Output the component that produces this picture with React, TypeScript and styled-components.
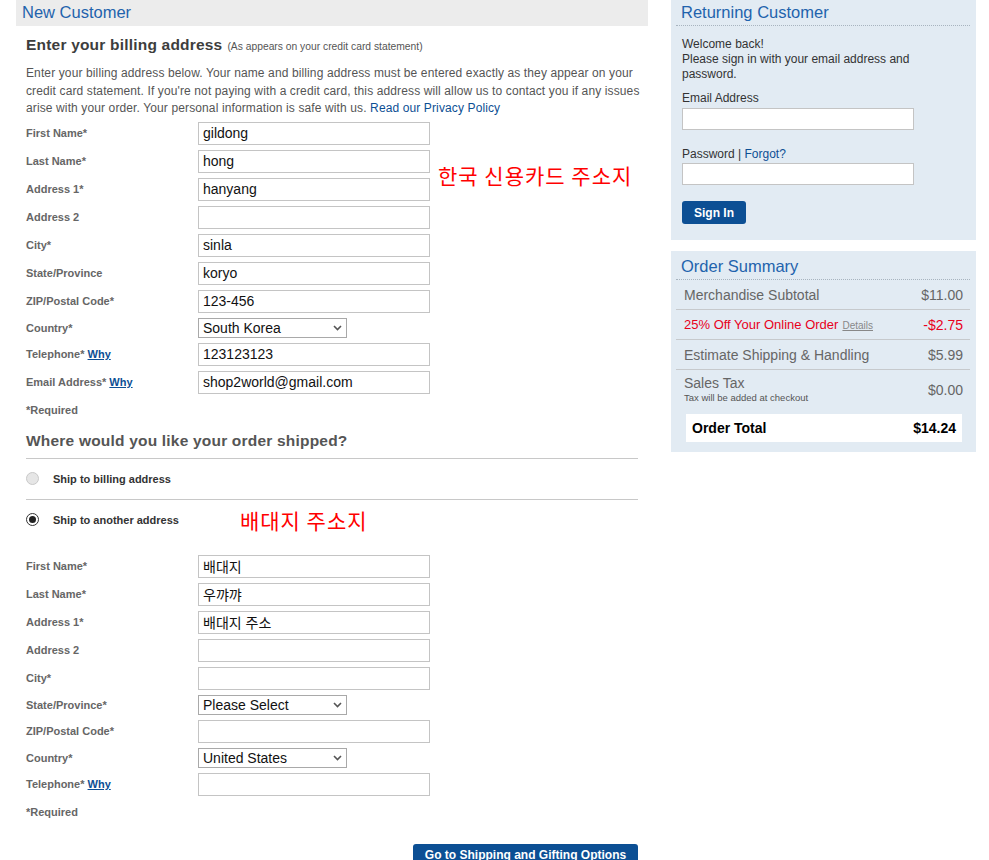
import styled, { createGlobalStyle } from 'styled-components'

const GlobalStyle = createGlobalStyle`
  body {
    margin: 0;
    background: #ffffff;
    font-family: "Liberation Sans", Arial, "Noto Sans CJK KR", sans-serif;
  }
`

const blue = '#1f63ad'
const linkBlue = '#0d4f94'

const Page = styled.div`
  display: flex;
  align-items: flex-start;
  gap: 23px;
  padding-left: 16px;
  width: 989px;
  box-sizing: border-box;
`

const LeftColumn = styled.div`
  width: 632px;
`

const SectionHeader = styled.div`
  height: 26px;
  background: #ececec;
  color: ${blue};
  font-size: 16.5px;
  line-height: 25px;
  padding-left: 6px;
`

const LeftBody = styled.div`
  padding: 0 10px;
`

const BillingTitle = styled.h2`
  margin: 10px 0 0;
  font-size: 15.5px;
  line-height: 18px;
  font-weight: bold;
  color: #3d3d3d;
  letter-spacing: 0.2px;
`

const TitleNote = styled.span`
  font-size: 10.3px;
  font-weight: normal;
  letter-spacing: 0;
  color: #555;
  margin-left: 5px;
`

const Intro = styled.p`
  margin: 9px 0 0;
  font-size: 12px;
  line-height: 17.5px;
  color: #555;
  letter-spacing: 0.12px;
  white-space: nowrap;
`

const Link = styled.a`
  color: ${linkBlue};
  text-decoration: none;
`

const FormGrid = styled.div<{ $top: number }>`
  display: grid;
  grid-template-columns: 172px 232px 1fr;
  row-gap: 5px;
  align-items: center;
  margin-top: ${({ $top }) => $top}px;
`

const Label = styled.label`
  grid-column: 1;
  font-size: 11px;
  font-weight: bold;
  color: #666;
`

const WhyLink = styled.a`
  color: ${linkBlue};
  text-decoration: underline;
`

const TextInput = styled.input`
  grid-column: 2;
  box-sizing: border-box;
  width: 232px;
  height: 23px;
  margin: 0;
  border: 1px solid #c4c4c4;
  padding: 0 4px;
  font-family: "Liberation Sans", Arial, "Noto Sans CJK KR", sans-serif;
  font-size: 14px;
  color: #111;
  background: #fff;
  outline: none;
`

const SelectBox = styled.div`
  grid-column: 2;
  box-sizing: border-box;
  width: 149px;
  height: 20px;
  border: 1px solid #a9a9a9;
  display: flex;
  align-items: center;
  justify-content: space-between;
  padding: 0 4px 0 4px;
  font-size: 14px;
  color: #111;
  background: #fff;
`

const Chevron = styled.svg`
  width: 9px;
  height: 9px;
`

const Annotation = styled.div`
  color: #ff0000;
  font-family: "Noto Sans CJK KR", sans-serif;
  font-size: 21px;
  letter-spacing: 1px;
  white-space: nowrap;
`

const SideNote = styled(Annotation)`
  grid-column: 3;
  grid-row: 2 / span 2;
  padding-left: 8px;
`

const Required = styled.div<{ $top: number }>`
  margin-top: ${({ $top }) => $top}px;
  font-size: 11px;
  font-weight: bold;
  color: #666;
  line-height: 13px;
`

const ShipHeading = styled.h3`
  margin: 15px 0 0;
  padding-bottom: 8px;
  font-size: 15.5px;
  line-height: 18px;
  font-weight: bold;
  color: #555;
  letter-spacing: 0.2px;
  border-bottom: 1px solid #c8c8c8;
`

const RadioRow = styled.div<{ $line?: boolean; $height: number }>`
  display: flex;
  align-items: center;
  height: ${({ $height }) => $height}px;
  border-bottom: ${({ $line }) => ($line ? '1px solid #c8c8c8' : 'none')};
`

const Radio = styled.span<{ $checked?: boolean }>`
  box-sizing: border-box;
  width: 13px;
  height: 13px;
  border-radius: 50%;
  border: 1px solid ${({ $checked }) => ($checked ? '#333' : '#c9c9c9')};
  background: ${({ $checked }) => ($checked ? '#fff' : '#e6e6e6')};
  display: flex;
  align-items: center;
  justify-content: center;

  &::after {
    content: '';
    width: 7px;
    height: 7px;
    border-radius: 50%;
    background: ${({ $checked }) => ($checked ? '#222' : 'transparent')};
  }
`

const RadioLabel = styled.span`
  margin-left: 14px;
  font-size: 11px;
  font-weight: bold;
  color: #333;
`

const InlineNote = styled(Annotation)`
  margin-left: 61px;
`

const ButtonBar = styled.div`
  display: flex;
  justify-content: flex-end;
  margin-top: 25px;
`

const PrimaryButton = styled.button<{ $width?: number }>`
  box-sizing: border-box;
  height: 23px;
  padding: 0 12px;
  border: none;
  border-radius: 3px;
  background: #0c4f94;
  color: #fff;
  font-family: "Liberation Sans", Arial, sans-serif;
  font-size: 12px;
  font-weight: bold;
  white-space: nowrap;
  ${({ $width }) => ($width ? `width: ${$width}px; padding: 0;` : '')}
`

const RightColumn = styled.div`
  width: 305px;
  display: flex;
  flex-direction: column;
  gap: 11px;
`

const Panel = styled.div<{ $height: number }>`
  box-sizing: border-box;
  height: ${({ $height }) => $height}px;
  background: #e2ebf3;
  padding: 0 6px 0 5px;
`

const PanelTitle = styled.div<{ $height: number }>`
  box-sizing: border-box;
  height: ${({ $height }) => $height}px;
  display: flex;
  align-items: flex-end;
  color: ${blue};
  font-size: 16.5px;
  line-height: 25px;
  padding-left: 5px;
  border-bottom: 1px dotted #a8b4bf;
`

const PanelBody = styled.div`
  padding: 11px 0 0 6px;
  font-size: 12px;
  color: #333;
`

const Welcome = styled.div`
  line-height: 15px;
`

const FieldLabel = styled.div<{ $top: number }>`
  margin-top: ${({ $top }) => $top}px;
  line-height: 15px;
`

const LoginInput = styled.input<{ $gap: number }>`
  display: block;
  box-sizing: border-box;
  width: 232px;
  height: 22px;
  margin: ${({ $gap }) => $gap}px 0 0;
  border: 1px solid #c4c4c4;
  background: #fff;
  outline: none;
`

const SignInRow = styled.div`
  margin-top: 16px;
`

const SummaryRow = styled.div<{ $line?: boolean; $height?: number; $red?: boolean }>`
  display: flex;
  align-items: center;
  justify-content: space-between;
  height: ${({ $height }) => $height ?? 30}px;
  padding: 0 7px 0 8px;
  border-bottom: ${({ $line }) => ($line ? '1px solid #c6c9cc' : 'none')};
  font-size: 14px;
  color: ${({ $red }) => ($red ? '#e8001c' : '#666')};
  box-sizing: border-box;
`

const DiscountLabel = styled.span`
  font-size: 13px;
`

const Details = styled.a`
  font-size: 10px;
  color: #888;
  text-decoration: underline;
  margin-left: 4px;
`

const TaxBlock = styled.div`
  display: flex;
  flex-direction: column;
  line-height: 15px;
`

const TaxNote = styled.span`
  font-size: 9.5px;
  line-height: 14px;
  color: #555;
`

const TotalBox = styled.div`
  display: flex;
  justify-content: space-between;
  align-items: center;
  margin: 4px 8px 0 10px;
  height: 28px;
  padding: 0 6px 0 6px;
  background: #fff;
  font-size: 14px;
  font-weight: bold;
  color: #000;
`

const SelectChevron = () => (
  <Chevron viewBox="0 0 9 9">
    <path d="M1 3 L4.5 6.5 L8 3" fill="none" stroke="#555" strokeWidth="1.6" />
  </Chevron>
)

type Field = {
  label: string
  value?: string
  select?: boolean
  why?: boolean
}

const billingFields: Field[] = [
  { label: 'First Name*', value: 'gildong' },
  { label: 'Last Name*', value: 'hong' },
  { label: 'Address 1*', value: 'hanyang' },
  { label: 'Address 2', value: '' },
  { label: 'City*', value: 'sinla' },
  { label: 'State/Province', value: 'koryo' },
  { label: 'ZIP/Postal Code*', value: '123-456' },
  { label: 'Country*', value: 'South Korea', select: true },
  { label: 'Telephone*', value: '123123123', why: true },
  { label: 'Email Address*', value: 'shop2world@gmail.com', why: true },
]

const shippingFields: Field[] = [
  { label: 'First Name*', value: '배대지' },
  { label: 'Last Name*', value: '우꺄꺄' },
  { label: 'Address 1*', value: '배대지 주소' },
  { label: 'Address 2', value: '' },
  { label: 'City*', value: '' },
  { label: 'State/Province*', value: 'Please Select', select: true },
  { label: 'ZIP/Postal Code*', value: '' },
  { label: 'Country*', value: 'United States', select: true },
  { label: 'Telephone*', value: '', why: true },
]

const renderFields = (fields: Field[]) =>
  fields.map((f) => [
    <Label key={f.label + '-l'}>
      {f.label}
      {f.why && (
        <>
          {' '}
          <WhyLink href="#">Why</WhyLink>
        </>
      )}
    </Label>,
    f.select ? (
      <SelectBox key={f.label + '-s'}>
        <span>{f.value}</span>
        <SelectChevron />
      </SelectBox>
    ) : (
      <TextInput key={f.label + '-i'} defaultValue={f.value} />
    ),
  ])

export default function App() {
  return (
    <>
      <GlobalStyle />
      <Page>
        <LeftColumn>
          <SectionHeader>New Customer</SectionHeader>
          <LeftBody>
            <BillingTitle>
              Enter your billing address
              <TitleNote>(As appears on your credit card statement)</TitleNote>
            </BillingTitle>
            <Intro>
              Enter your billing address below. Your name and billing address must be entered exactly as they appear on your
              <br />
              credit card statement. If you're not paying with a credit card, this address will allow us to contact you if any issues
              <br />
              arise with your order. Your personal information is safe with us. <Link href="#">Read our Privacy Policy</Link>
            </Intro>

            <FormGrid $top={4}>
              <SideNote>한국 신용카드 주소지</SideNote>
              {renderFields(billingFields)}
            </FormGrid>
            <Required $top={10}>*Required</Required>

            <ShipHeading>Where would you like your order shipped?</ShipHeading>
            <RadioRow $line $height={40}>
              <Radio />
              <RadioLabel>Ship to billing address</RadioLabel>
            </RadioRow>
            <RadioRow $height={40}>
              <Radio $checked />
              <RadioLabel>Ship to another address</RadioLabel>
              <InlineNote>배대지 주소지</InlineNote>
            </RadioRow>

            <FormGrid $top={15}>{renderFields(shippingFields)}</FormGrid>
            <Required $top={10}>*Required</Required>

            <ButtonBar>
              <PrimaryButton $width={225}>Go to Shipping and Gifting Options</PrimaryButton>
            </ButtonBar>
          </LeftBody>
        </LeftColumn>

        <RightColumn>
          <Panel $height={240}>
            <PanelTitle $height={26}>Returning Customer</PanelTitle>
            <PanelBody>
              <Welcome>
                Welcome back!
                <br />
                Please sign in with your email address and
                <br />
                password.
              </Welcome>
              <FieldLabel $top={9}>Email Address</FieldLabel>
              <LoginInput $gap={2} />
              <FieldLabel $top={17}>
                Password | <Link href="#">Forgot?</Link>
              </FieldLabel>
              <LoginInput $gap={1} />
              <SignInRow>
                <PrimaryButton>Sign In</PrimaryButton>
              </SignInRow>
            </PanelBody>
          </Panel>

          <Panel $height={201}>
            <PanelTitle $height={29}>Order Summary</PanelTitle>
            <SummaryRow $line>
              <span>Merchandise Subtotal</span>
              <span>$11.00</span>
            </SummaryRow>
            <SummaryRow $line $red>
              <DiscountLabel>
                25% Off Your Online Order<Details href="#">Details</Details>
              </DiscountLabel>
              <span>-$2.75</span>
            </SummaryRow>
            <SummaryRow $line>
              <span>Estimate Shipping &amp; Handling</span>
              <span>$5.99</span>
            </SummaryRow>
            <SummaryRow $height={40}>
              <TaxBlock>
                <span>Sales Tax</span>
                <TaxNote>Tax will be added at checkout</TaxNote>
              </TaxBlock>
              <span>$0.00</span>
            </SummaryRow>
            <TotalBox>
              <span>Order Total</span>
              <span>$14.24</span>
            </TotalBox>
          </Panel>
        </RightColumn>
      </Page>
    </>
  )
}
